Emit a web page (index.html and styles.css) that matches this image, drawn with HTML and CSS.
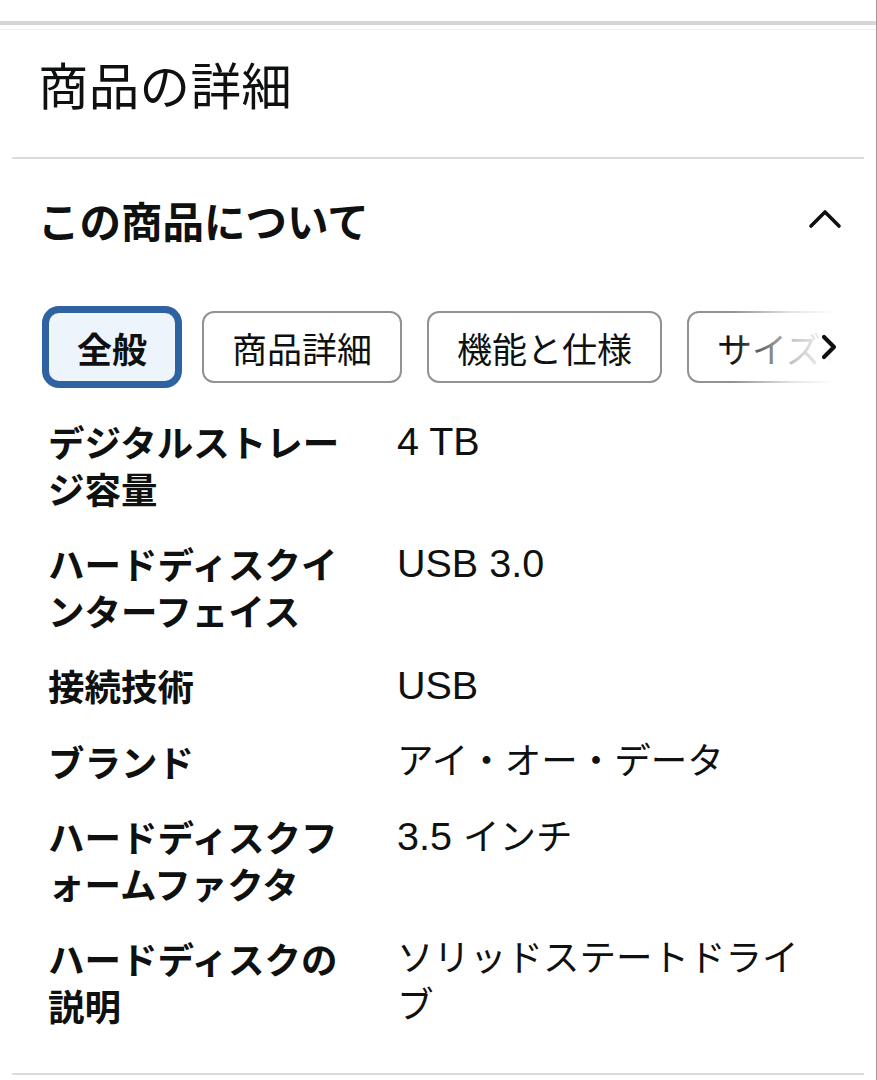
FILE: index.html
```html
<!DOCTYPE html>
<html lang="ja">
<head>
<meta charset="utf-8">
<title>商品の詳細</title>
<link rel="stylesheet" href="styles.css">
</head>
<body>
<div class="page">
  <div class="top-band"></div>
  <section class="details">
    <h2 class="title">商品の詳細</h2>
    <div class="rule"></div>
    <div class="expander-head">
      <h3 class="expander-title">この商品について</h3>
      <svg class="chev-up" width="34" height="20" viewBox="0 0 34 20" aria-hidden="true">
        <polyline points="3,17 17,3 31,17" fill="none" stroke="#0f1111" stroke-width="3.6" stroke-linecap="round" stroke-linejoin="round"/>
      </svg>
    </div>
    <div class="tabs-wrap">
      <div class="tabs">
        <span class="chip chip-selected">全般</span>
        <span class="chip">商品詳細</span>
        <span class="chip">機能と仕様</span>
        <span class="chip">サイズと容量</span>
      </div>
      <div class="tabs-fade">
        <svg class="chev-right" width="18" height="26" viewBox="0 0 18 26" aria-hidden="true">
          <polyline points="4,3 14,13 4,23" fill="none" stroke="#0f1111" stroke-width="4.2" stroke-linecap="round" stroke-linejoin="round"/>
        </svg>
      </div>
    </div>
    <div class="specs">
      <div class="spec-label">デジタルストレージ容量</div>
      <div class="spec-value"><span class="num">4 TB</span></div>
      <div class="spec-label">ハードディスクインターフェイス</div>
      <div class="spec-value"><span class="num">USB 3.0</span></div>
      <div class="spec-label">接続技術</div>
      <div class="spec-value"><span class="num">USB</span></div>
      <div class="spec-label">ブランド</div>
      <div class="spec-value">アイ・オー・データ</div>
      <div class="spec-label">ハードディスクフォームファクタ</div>
      <div class="spec-value"><span class="num">3.5 </span>インチ</div>
      <div class="spec-label">ハードディスクの説明</div>
      <div class="spec-value">ソリッドステートドライブ</div>
    </div>
    <div class="rule rule-bottom"></div>
  </section>
</div>
</body>
</html>
```

FILE: styles.css
```css
* { box-sizing: border-box; }

html, body {
  margin: 0;
  padding: 0;
  background: #ffffff;
}

body {
  font-family: "Liberation Sans", "Noto Sans CJK JP", sans-serif;
  color: #0f1111;
}

.page {
  width: 877px;
  min-height: 1080px;
  border-right: 1px solid #9a9a9a;
  padding-top: 21px;
}

.top-band {
  height: 9px;
  border-top: 4px solid #d5d7d7;
  border-bottom: 1px solid #f0f0f0;
}

.details {
  display: flex;
  flex-direction: column;
}

.title {
  margin: 22px 0 0 38px;
  font-family: "Noto Sans CJK JP", sans-serif;
  font-size: 50.5px;
  line-height: 62px;
  font-weight: 400;
  letter-spacing: 0.3px;
}

.rule {
  height: 2px;
  background: #d9dcdc;
  margin: 43px 12px 0 12px;
}

.expander-head {
  display: flex;
  align-items: center;
  justify-content: space-between;
  margin-top: 36px;
  padding: 0 34px 0 38px;
  height: 50px;
}

.expander-title {
  margin: 0;
  font-family: "Noto Sans CJK JP", sans-serif;
  font-size: 41.5px;
  line-height: 50px;
  font-weight: 700;
  letter-spacing: 0;
}

.chev-up {
  display: block;
  margin-top: -2px;
}

.tabs-wrap {
  position: relative;
  margin: 58px 36px 0 38px;
  overflow: hidden;
}

.tabs {
  display: flex;
  gap: 25px;
  padding: 8px 0 8px 9px;
}

.chip {
  flex-shrink: 0;
  display: flex;
  align-items: center;
  height: 72px;
  padding: 0 28px;
  border: 2px solid #8f9393;
  border-radius: 12px;
  background: #ffffff;
  font-family: "Noto Sans CJK JP", sans-serif;
  font-size: 35px;
  white-space: nowrap;
}

.chip-selected {
  border-color: #2f62a0;
  box-shadow: 0 0 0 5px #2f62a0;
  background: #edf4fc;
  font-weight: 700;
}

.tabs-fade {
  position: absolute;
  top: 0;
  right: 0;
  bottom: 0;
  width: 108px;
  background: linear-gradient(to right, rgba(255,255,255,0) 0%, rgba(255,255,255,0.75) 55%, #ffffff 95%);
  display: flex;
  align-items: center;
  justify-content: flex-end;
  padding-right: 2px;
}

.chev-right {
  display: block;
}

.specs {
  display: grid;
  grid-template-columns: 312px 407px;
  column-gap: 35px;
  row-gap: 28px;
  margin-top: 27px;
  padding-left: 48px;
  font-size: 36.5px;
  line-height: 47px;
}

.spec-label {
  font-family: "Noto Sans CJK JP", sans-serif;
  font-weight: 700;
}

.spec-value {
  font-weight: 400;
  padding-left: 2px;
}

.num {
  font-family: "Liberation Sans", sans-serif;
  font-size: 39.5px;
}

.rule-bottom {
  margin-top: 44px;
}
```
